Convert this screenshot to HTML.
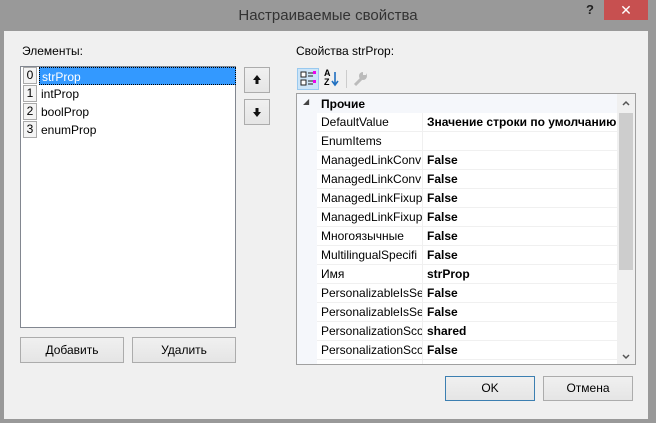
<!DOCTYPE html>
<html><head><meta charset="utf-8"><style>
*{box-sizing:border-box;margin:0;padding:0}
body{width:656px;height:423px;background:#999;position:relative;overflow:hidden;font-family:"Liberation Sans","DejaVu Sans",sans-serif;font-size:12px;color:#000}
.abs{position:absolute}
.title{left:0;top:0;width:656px;height:31px;text-align:center;line-height:32px;font-size:15px;color:#333}
.close{left:604px;top:0;width:44px;height:20px;background:#c75050;color:#fff;text-align:center;line-height:20px;font-size:14px;font-weight:bold}
.q{left:586px;top:2px;font-weight:bold;font-size:13px;color:#222}
.content{left:4px;top:31px;width:644px;height:388px;background:#f0f0f0}
.btn{background:linear-gradient(#f0f0f0,#e5e5e5);border:1px solid #acacac;text-align:center;font-size:12px}
.list{left:20px;top:66px;width:216px;height:262px;background:#fff;border:1px solid #828790}
.row{position:absolute;left:1px;height:18px;line-height:18px}
.num{position:absolute;left:1px;width:14px;height:17px;border:1px solid #aaa;background:#f4f4f4;text-align:center;line-height:15px;font-size:12px}
.lbl{position:absolute;left:17px;padding-left:2px;width:197px;height:18px}
.grid{left:296px;top:93px;width:340px;height:272px;background:#fff;border:1px solid #a0a0a0;overflow:hidden}
.gr{position:absolute;left:20px;width:300px;height:19px;border-bottom:1px solid #f0f0f0;line-height:18px}
.gr .n{position:absolute;left:4px;width:101px;overflow:hidden;white-space:nowrap}
.gr .v{position:absolute;left:105px;border-left:1px solid #f0f0f0;padding-left:4px;font-weight:bold;white-space:nowrap;height:19px}
</style></head><body>
<div class="abs title">Настраиваемые свойства</div>
<div class="abs q">?</div>
<div class="abs close">✕</div>
<div class="abs content"></div>
<div class="abs" style="left:22px;top:44px">Элементы:</div>
<div class="abs" style="left:296px;top:44px">Свойства strProp:</div>
<div class="abs list">
 <div class="row" style="top:0"><div class="num">0</div><div class="lbl" style="background:#3399ff;color:#fff;border:1px dotted #000">strProp</div></div>
 <div class="row" style="top:18px"><div class="num">1</div><div class="lbl">intProp</div></div>
 <div class="row" style="top:36px"><div class="num">2</div><div class="lbl">boolProp</div></div>
 <div class="row" style="top:54px"><div class="num">3</div><div class="lbl">enumProp</div></div>
</div>
<div class="abs btn" style="left:244px;top:67px;width:26px;height:26px"><svg width="24" height="24"><path d="M12 7l-4 5h2.5v4h3v-4H16z" fill="#111"/></svg></div>
<div class="abs btn" style="left:244px;top:99px;width:26px;height:26px"><svg width="24" height="24"><path d="M12 17l-4-5h2.5V8h3v4H16z" fill="#111"/></svg></div>
<div class="abs btn" style="left:20px;top:337px;width:104px;height:26px;line-height:24px">Добавить</div>
<div class="abs btn" style="left:132px;top:337px;width:104px;height:26px;line-height:24px">Удалить</div>
<div class="abs" style="left:297px;top:68px;width:22px;height:22px;background:#cce4f7;border:1px solid #99c9ef"></div>
<svg class="abs" style="left:300px;top:71px" width="16" height="16"><rect x="1" y="1" width="5" height="5" fill="#fff" stroke="#222"/><rect x="1" y="9" width="5" height="5" fill="#fff" stroke="#222"/><path d="M8 2h6M8 5h5M8 10h6M8 13h5" stroke="#222"/><rect x="13" y="0" width="3" height="3" fill="#e0e"/><rect x="13" y="9" width="3" height="3" fill="#e0e"/></svg>
<div class="abs" style="left:324px;top:69px;font-size:9px;font-weight:bold;line-height:9px">A<br>Z</div>
<svg class="abs" style="left:331px;top:71px" width="8" height="16"><path d="M4 1v12M1 10l3 4 3-4" stroke="#1f6fc0" stroke-width="1.6" fill="none"/></svg>
<div class="abs" style="left:346px;top:70px;width:1px;height:18px;background:#ccc"></div>
<svg class="abs" style="left:352px;top:70px" width="16" height="18"><path d="M3 15l6-6" stroke="#bbb" stroke-width="3"/><circle cx="11" cy="6" r="4" fill="#bbb"/><rect x="11" y="2" width="3" height="3" fill="#f0f0f0"/></svg>
<div class="abs grid">
 <div class="abs" style="left:0;top:0;width:320px;height:19px;background:#f5f7fb"></div>
 <div class="abs" style="left:0;top:0;width:20px;height:272px;background:#f5f7fb"></div>
 <div class="abs" style="left:6px;top:3px;font-size:8px;color:#444">◢</div>
 <div class="abs" style="left:24px;top:1px;font-weight:bold;line-height:18px">Прочие</div>
 <div class="gr" style="top:19px"><span class="n">DefaultValue</span><span class="v">Значение строки по умолчанию</span></div>
 <div class="gr" style="top:38px"><span class="n">EnumItems</span><span class="v"></span></div>
 <div class="gr" style="top:57px"><span class="n">ManagedLinkConv</span><span class="v">False</span></div>
 <div class="gr" style="top:76px"><span class="n">ManagedLinkConv</span><span class="v">False</span></div>
 <div class="gr" style="top:95px"><span class="n">ManagedLinkFixup</span><span class="v">False</span></div>
 <div class="gr" style="top:114px"><span class="n">ManagedLinkFixup</span><span class="v">False</span></div>
 <div class="gr" style="top:133px"><span class="n">Многоязычные</span><span class="v">False</span></div>
 <div class="gr" style="top:152px"><span class="n">MultilingualSpecifi</span><span class="v">False</span></div>
 <div class="gr" style="top:171px"><span class="n">Имя</span><span class="v">strProp</span></div>
 <div class="gr" style="top:190px"><span class="n">PersonalizableIsSeri</span><span class="v">False</span></div>
 <div class="gr" style="top:209px"><span class="n">PersonalizableIsSeri</span><span class="v">False</span></div>
 <div class="gr" style="top:228px"><span class="n">PersonalizationScop</span><span class="v">shared</span></div>
 <div class="gr" style="top:247px"><span class="n">PersonalizationScop</span><span class="v">False</span></div>
 <div class="gr" style="top:266px"><span class="n">PersonalizationScop</span><span class="v">True</span></div>
 <div class="abs" style="left:320px;top:0;width:18px;height:272px;background:#f0f0f0"></div>
 <div class="abs" style="left:322px;top:19px;width:14px;height:157px;background:#cdcdcd"></div>
 <svg class="abs" style="left:323px;top:4px" width="12" height="10"><path d="M3 7l3-3 3 3" stroke="#555" stroke-width="1.5" fill="none"/></svg>
 <svg class="abs" style="left:323px;top:258px" width="12" height="10"><path d="M3 3l3 3 3-3" stroke="#555" stroke-width="1.5" fill="none"/></svg>
</div>
<div class="abs btn" style="left:445px;top:376px;width:90px;height:25px;line-height:23px;border-color:#3c7fb1">OK</div>
<div class="abs btn" style="left:543px;top:376px;width:90px;height:25px;line-height:23px">Отмена</div>
</body></html>
